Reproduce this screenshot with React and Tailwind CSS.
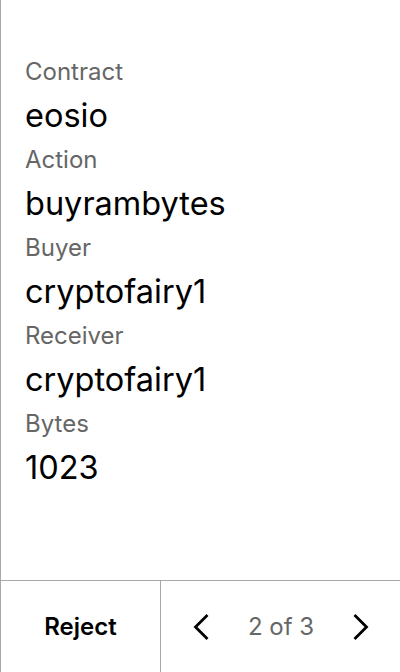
import React from 'react';

const fields = [
    { label: 'Contract', value: 'eosio' },
    { label: 'Action', value: 'buyrambytes' },
    { label: 'Buyer', value: 'cryptofairy1' },
    { label: 'Receiver', value: 'cryptofairy1' },
    { label: 'Bytes', value: '1023' },
];

function Chevron({ dir }) {
    return (
        <svg width="16" height="28" viewBox="0 0 16 28" fill="none">
            <path
                d={dir === 'left' ? 'M14.5 2 L2.5 14 L14.5 26' : 'M1.5 2 L13.5 14 L1.5 26'}
                stroke="#000"
                strokeWidth="2.8"
            />
        </svg>
    );
}

export default function App() {
    return (
        <div className="h-[672px] w-[400px] flex flex-col bg-white border-l border-[#a8a8a8] font-['Inter',sans-serif]">
            {/* Fields */}
            <div className="flex-1 pt-[54px] pl-6">
                {fields.map(f => (
                    <div key={f.label}>
                        <div className="text-[24px] leading-[36px] text-[#666]">{f.label}</div>
                        <div className="text-[32.5px] leading-[52px] text-black">{f.value}</div>
                    </div>
                ))}
            </div>

            {/* Footer */}
            <div className="h-[92px] flex border-t border-[#a8a8a8]">
                <button className="w-[160px] flex items-center justify-center text-[24px] font-semibold text-black border-r border-[#a8a8a8]">
                    Reject
                </button>
                <div className="flex-1 flex items-center justify-between pl-[32px] pr-[31px]">
                    <Chevron dir="left" />
                    <span className="text-[24px] text-[#666]">2 of 3</span>
                    <Chevron dir="right" />
                </div>
            </div>
        </div>
    );
}
